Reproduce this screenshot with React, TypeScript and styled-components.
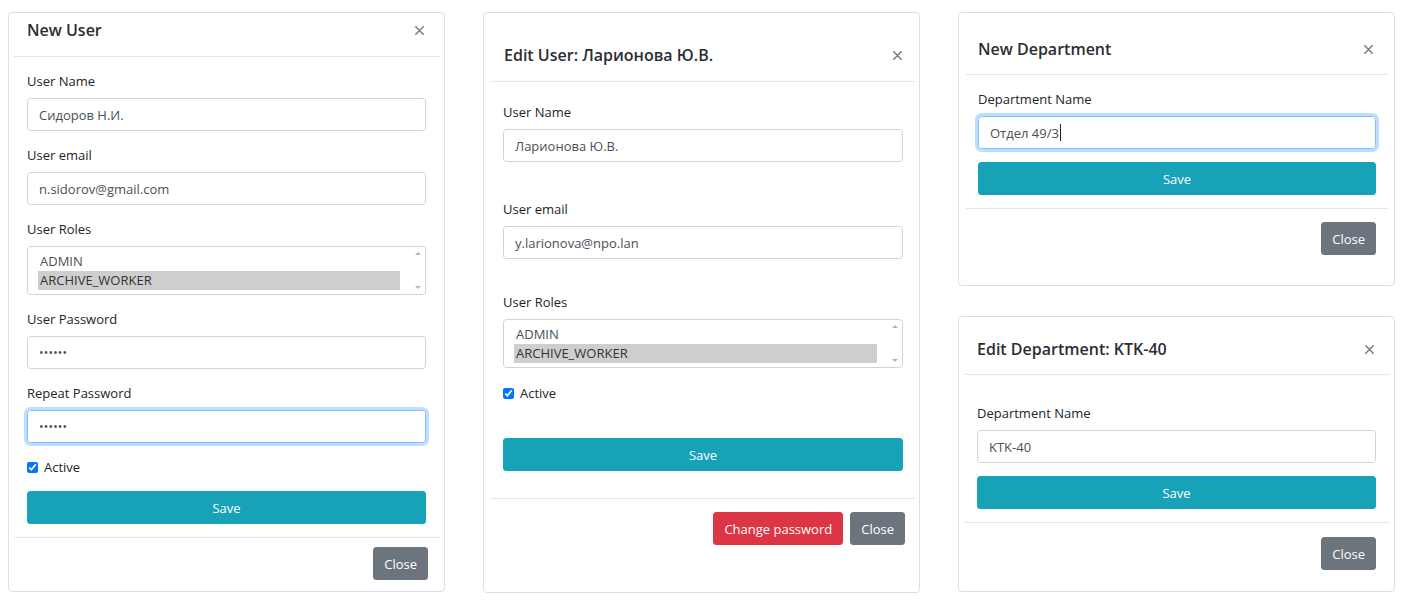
import React from "react";
import styled, { createGlobalStyle } from "styled-components";

const GlobalStyle = createGlobalStyle`
  html, body { margin: 0; padding: 0; background: #fff; }
  body {
    font-family: "Open Sans", "Noto Sans", sans-serif;
    font-size: 13px;
    color: #212529;
  }
  * { box-sizing: border-box; }
`;

const Page = styled.div`
  display: flex;
  align-items: flex-start;
  gap: 38px;
  padding: 12px 0 0 8px;
`;

const Column = styled.div`
  display: flex;
  flex-direction: column;
  gap: 30px;
`;

const Panel = styled.section<{ $h: number }>`
  width: 437px;
  height: ${(p) => p.$h}px;
  border: 1px solid #dcdfe3;
  border-radius: 4px;
  background: #fff;
  overflow: hidden;
`;

const Content = styled.div<{ $l: number; $r: number }>`
  margin: 0 ${(p) => p.$r}px 0 ${(p) => p.$l}px;
`;

const Header = styled.header<{ $pt: number; $pb: number; $pl: number; $xr: number }>`
  display: flex;
  align-items: center;
  justify-content: space-between;
  padding: ${(p) => p.$pt}px ${(p) => p.$xr}px ${(p) => p.$pb}px ${(p) => p.$pl}px;
  border-bottom: 1px solid #e3e6e9;
`;

const Title = styled.h5`
  margin: 0;
  font-size: 16px;
  font-weight: 600;
  line-height: 26px;
  color: #2a2e33;
`;

const CloseX = styled.button`
  display: flex;
  padding: 0;
  border: 0;
  background: transparent;
  width: 9px;
  height: 9px;
  cursor: pointer;
`;

const Body = styled.div<{ $pt: number; $pb: number; $pl: number; $pr: number }>`
  padding: ${(p) => p.$pt}px ${(p) => p.$pr}px ${(p) => p.$pb}px ${(p) => p.$pl}px;
  border-bottom: 1px solid #e3e6e9;
`;

const Group = styled.div<{ $mb?: number }>`
  margin-bottom: ${(p) => (p.$mb ?? 14)}px;
`;

const Label = styled.label`
  display: block;
  font-size: 13px;
  line-height: 20px;
  margin-bottom: 7px;
  color: #212529;
`;

const Field = styled.div<{ $focused?: boolean }>`
  display: flex;
  align-items: center;
  height: 33px;
  padding: 0 11px;
  border: 1px solid ${(p) => (p.$focused ? "#80bdff" : "#ced4da")};
  border-radius: 3.5px;
  box-shadow: ${(p) => (p.$focused ? "0 0 0 3px rgba(0,123,255,.25)" : "none")};
  font-size: 13px;
  color: #495057;
  white-space: nowrap;
`;

const Dots = styled.span`
  font-size: 12px;
  letter-spacing: 0.2px;
  color: #495057;
`;

const Caret = styled.span`
  display: inline-block;
  width: 1px;
  height: 17px;
  margin-left: 1px;
  background: #222;
`;

const ListBox = styled.div`
  display: flex;
  height: 49px;
  border: 1px solid #ced4da;
  border-radius: 3.5px;
  overflow: hidden;
`;

const Options = styled.ul`
  flex: 1;
  list-style: none;
  margin: 0;
  padding: 5px 11px 0 10px;
`;

const Option = styled.li<{ $selected?: boolean }>`
  height: 19px;
  line-height: 19px;
  padding-left: 2px;
  font-size: 13px;
  color: ${(p) => (p.$selected ? "#333" : "#495057")};
  background: ${(p) => (p.$selected ? "#cecece" : "transparent")};
`;

const ScrollTrack = styled.div`
  width: 14px;
  display: flex;
  flex-direction: column;
  justify-content: space-between;
  align-items: center;
  padding: 5px 0 5px;
`;

const Arrow = styled.span<{ $down?: boolean }>`
  width: 0;
  height: 0;
  border-left: 3px solid transparent;
  border-right: 3px solid transparent;
  ${(p) =>
    p.$down
      ? "border-top: 3px solid #b5b5b5;"
      : "border-bottom: 3px solid #b5b5b5;"}
`;

const CheckRow = styled.label<{ $mb: number }>`
  display: flex;
  align-items: center;
  gap: 6px;
  height: 20px;
  margin-bottom: ${(p) => p.$mb}px;
  font-size: 13px;
  color: #212529;
`;

const Check = styled.input`
  width: 11px;
  height: 11px;
  margin: 0;
  accent-color: #0075ff;
`;

const Button = styled.button<{ $variant: "info" | "danger" | "secondary"; $block?: boolean }>`
  display: ${(p) => (p.$block ? "block" : "inline-block")};
  width: ${(p) => (p.$block ? "100%" : "auto")};
  height: 33px;
  padding: 0 11px;
  border: 0;
  border-radius: 3.5px;
  font-family: inherit;
  font-size: 13px;
  color: #fff;
  background: ${(p) =>
    p.$variant === "info" ? "#17a2b8" : p.$variant === "danger" ? "#dc3545" : "#6c757d"};
  cursor: pointer;
`;

const Footer = styled.footer<{ $pt: number; $pr: number }>`
  display: flex;
  justify-content: flex-end;
  gap: 7px;
  padding: ${(p) => p.$pt}px ${(p) => p.$pr}px 0 0;
`;

const XIcon = () => (
  <svg width="9" height="9" viewBox="0 0 9 9">
    <path d="M0.8 0.8 L8.2 8.2 M8.2 0.8 L0.8 8.2" stroke="#808080" strokeWidth="1.6" strokeLinecap="round" />
  </svg>
);

const RolesList = () => (
  <ListBox>
    <Options>
      <Option>ADMIN</Option>
      <Option $selected>ARCHIVE_WORKER</Option>
    </Options>
    <ScrollTrack>
      <Arrow />
      <Arrow $down />
    </ScrollTrack>
  </ListBox>
);

export default function App() {
  return (
    <>
      <GlobalStyle />
      <Page>
        <Panel $h={580}>
          <Content $l={5} $r={4}>
            <Header $pt={4} $pb={13} $pl={13} $xr={16}>
              <Title>New User</Title>
              <CloseX aria-label="Close"><XIcon /></CloseX>
            </Header>
            <Body $pt={14} $pb={13} $pl={13} $pr={14}>
              <Group>
                <Label>User Name</Label>
                <Field>Сидоров Н.И.</Field>
              </Group>
              <Group>
                <Label>User email</Label>
                <Field>n.sidorov@gmail.com</Field>
              </Group>
              <Group>
                <Label>User Roles</Label>
                <RolesList />
              </Group>
              <Group>
                <Label>User Password</Label>
                <Field><Dots>••••••</Dots></Field>
              </Group>
              <Group>
                <Label>Repeat Password</Label>
                <Field $focused><Dots>••••••</Dots></Field>
              </Group>
              <CheckRow $mb={14}>
                <Check type="checkbox" defaultChecked />
                Active
              </CheckRow>
              <Button $variant="info" $block>Save</Button>
            </Body>
            <Footer $pt={9} $pr={12}>
              <Button $variant="secondary">Close</Button>
            </Footer>
          </Content>
        </Panel>

        <Panel $h={581}>
          <Content $l={7} $r={4}>
            <Header $pt={29} $pb={13} $pl={13} $xr={13}>
              <Title>Edit User: Ларионова Ю.В.</Title>
              <CloseX aria-label="Close"><XIcon /></CloseX>
            </Header>
            <Body $pt={20} $pb={27} $pl={12} $pr={12}>
              <Group $mb={37}>
                <Label>User Name</Label>
                <Field>Ларионова Ю.В.</Field>
              </Group>
              <Group $mb={33}>
                <Label>User email</Label>
                <Field>y.larionova@npo.lan</Field>
              </Group>
              <Group $mb={15}>
                <Label>User Roles</Label>
                <RolesList />
              </Group>
              <CheckRow $mb={35}>
                <Check type="checkbox" defaultChecked />
                Active
              </CheckRow>
              <Button $variant="info" $block>Save</Button>
            </Body>
            <Footer $pt={13} $pr={10}>
              <Button $variant="danger">Change password</Button>
              <Button $variant="secondary">Close</Button>
            </Footer>
          </Content>
        </Panel>

        <Column>
          <Panel $h={274}>
            <Content $l={7} $r={6}>
              <Header $pt={23} $pb={12} $pl={12} $xr={15}>
                <Title>New Department</Title>
                <CloseX aria-label="Close"><XIcon /></CloseX>
              </Header>
              <Body $pt={14} $pb={13} $pl={12} $pr={12}>
                <Group $mb={13}>
                  <Label>Department Name</Label>
                  <Field $focused>Отдел 49/3<Caret /></Field>
                </Group>
                <Button $variant="info" $block>Save</Button>
              </Body>
              <Footer $pt={13} $pr={12}>
                <Button $variant="secondary">Close</Button>
              </Footer>
            </Content>
          </Panel>

          <Panel $h={276}>
            <Content $l={5} $r={4}>
              <Header $pt={19} $pb={12} $pl={13} $xr={16}>
                <Title>Edit Department: KTK-40</Title>
                <CloseX aria-label="Close"><XIcon /></CloseX>
              </Header>
              <Body $pt={28} $pb={13} $pl={13} $pr={14}>
                <Group $mb={13}>
                  <Label>Department Name</Label>
                  <Field>KTK-40</Field>
                </Group>
                <Button $variant="info" $block>Save</Button>
              </Body>
              <Footer $pt={14} $pr={14}>
                <Button $variant="secondary">Close</Button>
              </Footer>
            </Content>
          </Panel>
        </Column>
      </Page>
    </>
  );
}
